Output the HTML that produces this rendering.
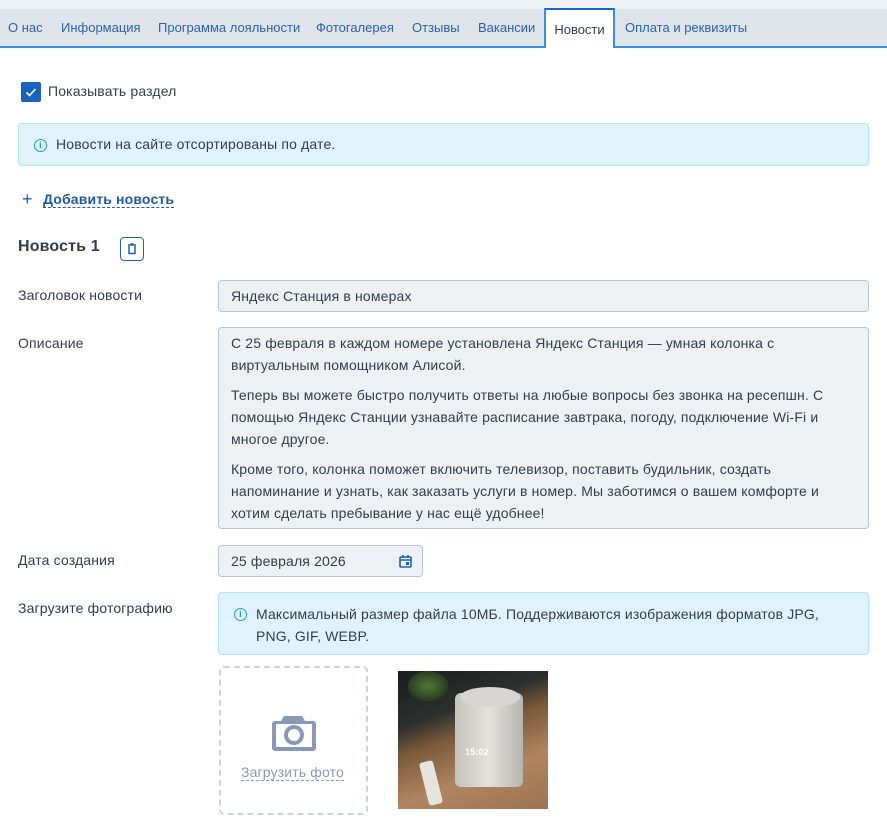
<!DOCTYPE html>
<html><head><meta charset="utf-8">
<style>
*{box-sizing:border-box;margin:0;padding:0}
body{width:887px;height:839px;overflow:hidden;background:#fff;font-family:"Liberation Sans","DejaVu Sans",sans-serif;color:#333d4a;font-size:14px;letter-spacing:0.15px;position:relative}
.top{position:absolute;left:0;top:0;width:887px;height:9px;background:#eef1f4}
.tabs{position:absolute;left:0;top:9px;width:887px;height:39px;background:#dfe3ea;border-bottom:2px solid #3a8fe0}
.tab{position:absolute;top:0;height:37px;line-height:37px;color:#2d62a8;font-size:13px;letter-spacing:0}
.tab.act{top:-1px;height:40px;background:#fff;border:2px solid #3a8fe0;border-bottom:none;border-top-color:#1b66c9;color:#333d4a;text-align:center;line-height:40px}
.abs{position:absolute}
.info{position:absolute;background:#e0f3fc;border:1px solid #b4e2f7;border-radius:4px}
.ic{position:absolute;width:13px;height:13px;border:1.5px solid #1e9be0;border-radius:50%;color:#1e9be0;font-size:9px;line-height:10px;text-align:center;font-weight:bold}
.label{position:absolute;left:18px;font-size:14px}
.field{position:absolute;left:218px;background:#eef1f4;border:1px solid #b9c3d1;border-radius:4px;padding-left:12px}
.desc p{line-height:22px;margin-bottom:8px}
</style></head><body>
<div class="top"></div>
<div class="tabs">
<div class="tab" style="left:8px">О нас</div>
<div class="tab" style="left:61px">Информация</div>
<div class="tab" style="left:158px">Программа лояльности</div>
<div class="tab" style="left:316px">Фотогалерея</div>
<div class="tab" style="left:412px">Отзывы</div>
<div class="tab" style="left:478px">Вакансии</div>
<div class="tab act" style="left:544px;width:71px">Новости</div>
<div class="tab" style="left:625px">Оплата и реквизиты</div>
</div>

<div class="abs" style="left:21px;top:82px;width:20px;height:20px;background:#1b62bd;border-radius:2px">
<svg width="20" height="20"><path d="M5.5 10.5l3 3 6-6.5" stroke="#fff" stroke-width="1.6" fill="none"/></svg></div>
<div class="abs" style="left:48px;top:83px">Показывать раздел</div>

<div class="info" style="left:18px;top:123px;width:851px;height:43px">
<div class="ic" style="left:15px;top:15px">i</div>
<div class="abs" style="left:37px;top:12px">Новости на сайте отсортированы по дате.</div></div>

<div class="abs" style="left:22px;top:189px;color:#1b62bd;font-size:18px">+</div>
<div class="abs" style="left:43px;top:191px;color:#1f5aa8;font-weight:bold;border-bottom:1px dashed #1f5aa8;line-height:16px">Добавить новость</div>

<div class="abs" style="left:18px;top:238px;font-weight:bold;font-size:16px;color:#333d4a">Новость 1</div>
<div class="abs" style="left:120px;top:237px;width:24px;height:24px;border:1px solid #1b62bd;border-radius:4px">
<svg width="22" height="22"><path d="M7 7h8M9.5 6h3M8 8v7.5h6V8" stroke="#1b62bd" stroke-width="1.5" fill="none"/></svg></div>

<div class="label" style="top:287px">Заголовок новости</div>
<div class="field" style="top:280px;width:651px;height:32px;line-height:31px">Яндекс Станция в номерах</div>

<div class="label" style="top:335px">Описание</div>
<div class="field desc" style="top:327px;width:651px;height:202px;padding-top:4px;padding-right:10px">
<p>С 25 февраля в каждом номере установлена Яндекс Станция — умная колонка с виртуальным помощником Алисой.</p>
<p>Теперь вы можете быстро получить ответы на любые вопросы без звонка на ресепшн. С помощью Яндекс Станции узнавайте расписание завтрака, погоду, подключение Wi-Fi и многое другое.</p>
<p>Кроме того, колонка поможет включить телевизор, поставить будильник, создать напоминание и узнать, как заказать услуги в номер. Мы заботимся о вашем комфорте и хотим сделать пребывание у нас ещё удобнее!</p>
</div>

<div class="label" style="top:552px">Дата создания</div>
<div class="field" style="top:545px;width:205px;height:32px;line-height:31px">25 февраля 2026
<svg class="abs" style="left:180px;top:9px" width="13" height="13"><rect x="1" y="2" width="11" height="10" rx="1" stroke="#1b62bd" stroke-width="1.6" fill="none"/><path d="M1 5h11M4 0v3M9 0v3" stroke="#1b62bd" stroke-width="1.6"/><rect x="7" y="7" width="3" height="3" fill="#1b62bd"/></svg></div>

<div class="label" style="top:600px">Загрузите фотографию</div>
<div class="info" style="left:218px;top:592px;width:651px;height:63px">
<div class="ic" style="left:15px;top:15px">i</div>
<div class="abs" style="left:37px;top:10px;line-height:22px;width:600px">Максимальный размер файла 10МБ. Поддерживаются изображения форматов JPG, PNG, GIF, WEBP.</div></div>

<div class="abs" style="left:219px;top:666px;width:149px;height:149px;border:2px dashed #ccd3de;border-radius:5px">
<svg class="abs" style="left:49px;top:44px" width="48" height="42"><path d="M14 4h18l3 5h8a3 3 0 0 1 3 3v24a3 3 0 0 1-3 3H5a3 3 0 0 1-3-3V12a3 3 0 0 1 3-3h6z" fill="#8799b6"/><rect x="6" y="12" width="36" height="23" fill="#fff"/><circle cx="24" cy="23" r="10" fill="#8799b6"/><circle cx="24" cy="23" r="6" fill="#fff"/></svg>
<div class="abs" style="left:20px;top:96px;color:#8799b6;border-bottom:1px dashed #8799b6;line-height:16px">Загрузить фото</div></div>

<div class="abs" style="left:398px;top:671px;width:150px;height:138px;overflow:hidden;background:linear-gradient(160deg,#1a1d1c 0%,#2b2f2d 30%,#7a5a3a 45%,#b08560 70%,#9c7350 100%)">
<div class="abs" style="left:10px;top:0;width:40px;height:30px;background:radial-gradient(#4f7a35,#2a3a20 70%,transparent 72%)"></div>
<div class="abs" style="left:57px;top:22px;width:68px;height:94px;background:linear-gradient(90deg,#c5c3be,#e3e1dc 50%,#b8b5b0);border-radius:6px"></div>
<div class="abs" style="left:62px;top:16px;width:60px;height:20px;background:#d8d6d2;border-radius:50%"></div>
<div class="abs" style="left:67px;top:76px;color:#fff;font-size:9px;font-weight:bold">15:02</div>
<div class="abs" style="left:26px;top:90px;width:14px;height:44px;background:#e6e4e0;border-radius:3px;transform:rotate(-14deg)"></div>
</div>
</body></html>
